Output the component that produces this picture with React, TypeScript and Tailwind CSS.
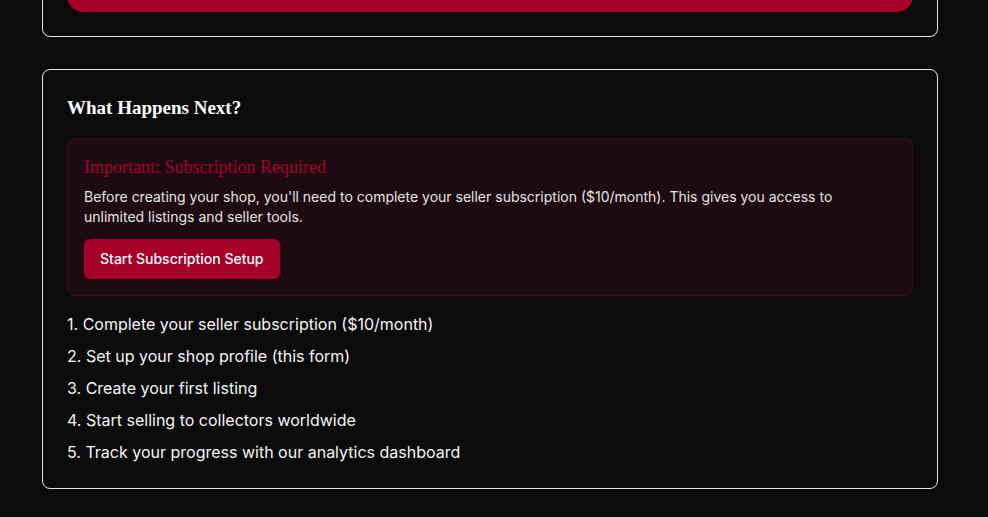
const steps = [
  "Complete your seller subscription ($10/month)",
  "Set up your shop profile (this form)",
  "Create your first listing",
  "Start selling to collectors worldwide",
  "Track your progress with our analytics dashboard",
];

export default function App() {
  return (
    <div className="min-h-screen overflow-hidden bg-[#0b0b0b] font-['Inter',sans-serif] text-white">
      <div className="-mt-[61px] ml-[42px] flex w-[896px] flex-col gap-8 pb-8">
        <div className="rounded-lg border border-white/90 p-6">
          <button
            type="button"
            className="flex h-12 w-full items-center justify-center rounded-2xl bg-[#a50026] pl-[130px] text-base font-semibold text-white"
          >
            Save Shop Setup
          </button>
        </div>

        <div className="rounded-lg border border-white/90 p-6">
          <h2 className="font-['Liberation_Serif',serif] text-[19px] font-bold leading-7 text-white">
            What Happens Next?
          </h2>

          <div className="mt-4 rounded-lg border border-[#3f0a19] bg-[#1d0b11] p-4">
            <h3 className="mb-2 font-['Liberation_Serif',serif] text-lg leading-6 text-[#a6002a]">
              Important: Subscription Required
            </h3>
            <p className="text-sm leading-5 text-neutral-200">
              Before creating your shop, you'll need to complete your seller subscription ($10/month). This gives you access to unlimited listings and seller tools.
            </p>
            <button
              type="button"
              className="mt-3 h-10 rounded-md bg-[#a6002a] px-4 text-sm font-medium text-white"
            >
              Start Subscription Setup
            </button>
          </div>

          <ol className="mt-4 flex flex-col gap-2 text-base leading-6 text-neutral-100">
            {steps.map((s, i) => (
              <li key={s}>
                {i + 1}. {s}
              </li>
            ))}
          </ol>
        </div>
      </div>
    </div>
  );
}
